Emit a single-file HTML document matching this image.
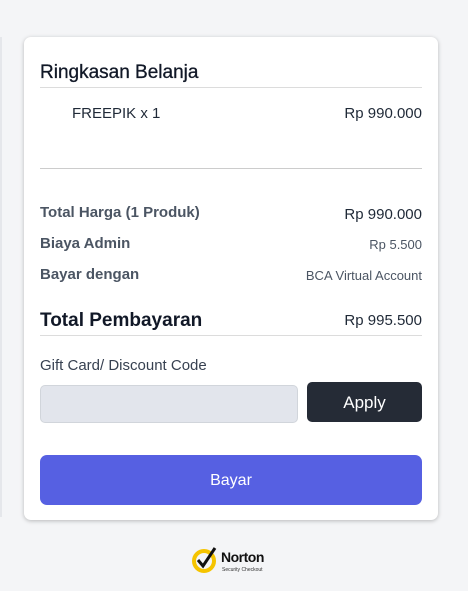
<!DOCTYPE html>
<html><head><style>
body{margin:0;width:468px;height:591px;background:#f4f5f7;font-family:"Liberation Sans",sans-serif;color:#1f2937;position:relative;overflow:hidden}
.edge{position:absolute;left:0;top:37px;width:2px;height:480px;background:#e5e7eb}
.card{position:absolute;left:24px;top:37px;width:414px;height:483px;background:#fff;border-radius:7px;box-shadow:0 1px 4px rgba(0,0,0,.25)}
.a{position:absolute;white-space:nowrap}
.hr{position:absolute;left:16px;width:382px;height:1px;background:#dcdcdc}
</style></head><body>
<div class="edge"></div>
<div class="card">
<div class="a" style="left:16px;top:25px;font-size:19px;color:#111827;-webkit-text-stroke:.3px #111827">Ringkasan Belanja</div>
<div class="hr" style="top:50px"></div>
<div class="a" style="left:48px;top:68px;font-size:15px">FREEPIK x 1</div>
<div class="a" style="right:16px;top:68px;font-size:15px">Rp 990.000</div>
<div class="hr" style="top:131px;background:#ccc"></div>
<div class="a" style="left:16px;top:167px;font-size:15px;font-weight:bold;color:#4b5563">Total Harga (1 Produk)</div>
<div class="a" style="right:16px;top:169px;font-size:15px">Rp 990.000</div>
<div class="a" style="left:16px;top:198px;font-size:15px;font-weight:bold;color:#4b5563">Biaya Admin</div>
<div class="a" style="right:16px;top:200px;font-size:13px;color:#4b5563">Rp 5.500</div>
<div class="a" style="left:16px;top:229px;font-size:15px;font-weight:bold;color:#4b5563">Bayar dengan</div>
<div class="a" style="right:16px;top:231px;font-size:13px;color:#4b5563">BCA Virtual Account</div>
<div class="a" style="left:16px;top:273px;font-size:19px;font-weight:bold;color:#111827">Total Pembayaran</div>
<div class="a" style="right:16px;top:275px;font-size:15px">Rp 995.500</div>
<div class="hr" style="top:298px"></div>
<div class="a" style="left:16px;top:320px;font-size:15px;color:#374151">Gift Card/ Discount Code</div>
<div class="a" style="left:16px;top:348px;width:256px;height:36px;background:#e2e5ec;border:1px solid #d1d5db;border-radius:5px"></div>
<div class="a" style="left:283px;top:345px;width:115px;height:40px;background:#252b36;border-radius:5px;color:#fff;font-size:17px;text-align:center;line-height:42px">Apply</div>
<div class="a" style="left:16px;top:418px;width:382px;height:50px;background:#5660e2;border-radius:7px;color:#fff;font-size:16px;text-align:center;line-height:52px">Bayar</div>
</div>
<svg class="a" style="left:191px;top:545px" width="30" height="30" viewBox="0 0 30 30"><circle cx="13" cy="16" r="10" fill="none" stroke="#f5c400" stroke-width="4"/><path d="M7 15l5 6L24 3" fill="none" stroke="#111" stroke-width="3"/></svg>
<div class="a" style="left:221px;top:549px;font-size:14px;font-weight:bold;color:#111;letter-spacing:-.5px">Norton</div>
<div class="a" style="left:222px;top:567px;font-size:5px;color:#333">Security Checkout</div>
</body></html>
